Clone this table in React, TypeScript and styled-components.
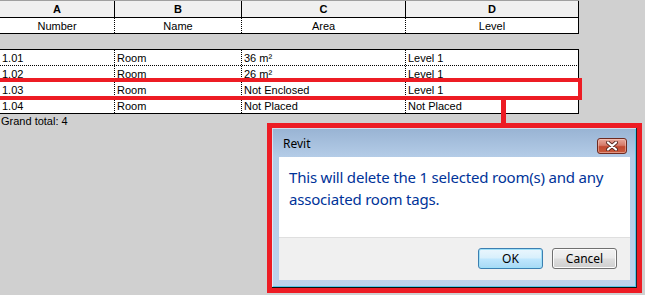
import React from "react";
import styled, { createGlobalStyle } from "styled-components";

const GlobalStyle = createGlobalStyle`
  html, body {
    margin: 0;
    padding: 0;
    background: #d0d0d0;
  }
  body {
    width: 645px;
    height: 295px;
    overflow: hidden;
    font-family: "Liberation Sans", Arial, sans-serif;
  }
`;

const Page = styled.div`
  display: flex;
  flex-direction: column;
  width: 645px;
`;

const Schedule = styled.div`
  position: relative;
  width: 579px;
  display: flex;
  flex-direction: column;
`;

const HeaderTable = styled.div`
  border-top: 1px solid #a0a0a0;
  border-bottom: 1px solid #000;
  background: #fff;
`;

const BodyTable = styled.div`
  margin-top: 15px;
  border-top: 1px solid #000;
  border-bottom: 1px solid #000;
  background: #fff;
`;

const Row = styled.div<{ $kind: "letters" | "titles" | "data"; $last?: boolean }>`
  display: grid;
  grid-template-columns: 115px 127px 164px 173px;
  height: ${(p) => (p.$kind === "letters" ? 16 : 15)}px;
  background: ${(p) => (p.$kind === "letters" ? "#f0f0f0" : "#fff")};
  border-bottom: ${(p) =>
    p.$kind === "letters"
      ? "1px solid #000"
      : p.$kind === "data" && !p.$last
      ? "1px dotted #000"
      : "none"};
`;

const Cell = styled.div<{ $kind: "letters" | "titles" | "data" }>`
  font-size: 11px;
  line-height: ${(p) => (p.$kind === "letters" ? 17 : 16)}px;
  color: #000;
  white-space: nowrap;
  overflow: hidden;
  padding-left: ${(p) => (p.$kind === "data" ? 2 : 0)}px;
  text-align: ${(p) => (p.$kind === "data" ? "left" : "center")};
  font-weight: ${(p) => (p.$kind === "letters" ? 700 : 400)};
  border-right: 1px ${(p) => (p.$kind === "letters" ? "solid" : "dotted")} #000;
  &:last-child {
    border-right: 1px solid #000;
  }
`;

/* red annotation frame around the selected row */
const RowHighlight = styled.div`
  position: absolute;
  left: -10px;
  top: 78px;
  width: 592px;
  height: 22px;
  box-sizing: border-box;
  border: 4.5px solid #ed1c24;
  pointer-events: none;
`;

const Footer = styled.div`
  display: flex;
  justify-content: space-between;
  align-items: flex-start;
`;

const GrandTotal = styled.div`
  font-size: 11px;
  line-height: 15px;
  padding: 0 0 0 1px;
  color: #000;
`;

const Callout = styled.div`
  position: relative;
  margin: 9px 3px 0 0;
  border: 5px solid #ed1c24;
  width: 365px;
  height: 160px;

  /* leader line up to the highlighted row */
  &::before {
    content: "";
    position: absolute;
    left: 229px;
    top: -28px;
    width: 5px;
    height: 23px;
    background: #ed1c24;
  }
`;

const Window = styled.div`
  box-sizing: border-box;
  width: 365px;
  height: 160px;
  display: flex;
  flex-direction: column;
  padding: 0 6px 7px 7px;
  background: linear-gradient(to bottom, #98b3d3 0px, #b4cce7 29px, #bdd3ec 100%);
  border-right: 1px solid #1d2a38;
  border-bottom: 1px solid #111;
  box-shadow: inset 1px 1px 0 rgba(255, 255, 255, 0.55), inset -1px -1px 0 #58c8e8;
  font-family: "Noto Sans", "Open Sans", sans-serif;
`;

const TitleBar = styled.div`
  height: 29px;
  display: flex;
  justify-content: space-between;
  align-items: flex-start;
  box-sizing: border-box;
  padding-top: 8px;
`;

const Title = styled.div`
  font-size: 12px;
  line-height: 16px;
  color: #000;
  padding-left: 4px;
`;

const CloseButton = styled.div`
  box-sizing: border-box;
  width: 30px;
  height: 16px;
  margin: 2px 3px 0 0;
  border: 1px solid #6e2a20;
  border-radius: 3px;
  background: linear-gradient(to bottom, #e8a99c 0%, #d57a69 45%, #c2482f 55%, #c85b3e 100%);
  box-shadow: inset 0 0 0 1px rgba(255, 220, 210, 0.45);
  display: flex;
  align-items: center;
  justify-content: center;
`;

const Client = styled.div`
  flex: 1;
  display: flex;
  flex-direction: column;
`;

const MessageArea = styled.div`
  height: 81px;
  background: #fff;
  border-bottom: 1px solid #dfdfdf;
  padding: 9px 0 0 10px;
  box-sizing: border-box;
`;

const Message = styled.div`
  font-size: 15px;
  line-height: 22px;
  color: #003399;
  letter-spacing: -0.2px;
  white-space: nowrap;
`;

const ButtonBar = styled.div`
  flex: 1;
  background: #f0f0f0;
  display: flex;
  justify-content: flex-end;
  align-items: flex-start;
  gap: 9px;
  padding: 10px 13px 0 0;
`;

const DialogButton = styled.button<{ $default?: boolean }>`
  box-sizing: border-box;
  width: 65px;
  height: 21px;
  padding: 0;
  font-family: "Noto Sans", "Open Sans", sans-serif;
  font-size: 12px;
  line-height: 18px;
  color: #000;
  border-radius: 3px;
  border: 1px solid ${(p) => (p.$default ? "#3c7fb1" : "#707070")};
  background: ${(p) =>
    p.$default
      ? "linear-gradient(to bottom, #eaf6fd 0%, #d9f0fc 45%, #bee6fd 55%, #a7d9f5 100%)"
      : "linear-gradient(to bottom, #f2f2f2 0%, #ebebeb 45%, #dddddd 55%, #cfcfcf 100%)"};
  box-shadow: inset 0 0 0 1px ${(p) => (p.$default ? "#9fe0f8" : "#fcfcfc")};
`;

const CloseGlyph = () => (
  <svg width="12" height="10" viewBox="0 0 12 10">
    <path d="M2 1.5 L10 8.5 M10 1.5 L2 8.5" stroke="#5a2a22" strokeWidth="4" strokeLinecap="round" />
    <path d="M2 1.5 L10 8.5 M10 1.5 L2 8.5" stroke="#ffffff" strokeWidth="2.2" strokeLinecap="round" />
  </svg>
);

type Room = { number: string; name: string; area: string; level: string };

const rooms: Room[] = [
  { number: "1.01", name: "Room", area: "36 m²", level: "Level 1" },
  { number: "1.02", name: "Room", area: "26 m²", level: "Level 1" },
  { number: "1.03", name: "Room", area: "Not Enclosed", level: "Level 1" },
  { number: "1.04", name: "Room", area: "Not Placed", level: "Not Placed" },
];

export default function App() {
  return (
    <>
      <GlobalStyle />
      <Page>
        <Schedule>
          <HeaderTable>
            <Row $kind="letters">
              {["A", "B", "C", "D"].map((l) => (
                <Cell key={l} $kind="letters">{l}</Cell>
              ))}
            </Row>
            <Row $kind="titles">
              {["Number", "Name", "Area", "Level"].map((t) => (
                <Cell key={t} $kind="titles">{t}</Cell>
              ))}
            </Row>
          </HeaderTable>
          <BodyTable>
            {rooms.map((r, i) => (
              <Row key={r.number} $kind="data" $last={i === rooms.length - 1}>
                <Cell $kind="data">{r.number}</Cell>
                <Cell $kind="data">{r.name}</Cell>
                <Cell $kind="data">{r.area}</Cell>
                <Cell $kind="data">{r.level}</Cell>
              </Row>
            ))}
          </BodyTable>
          <RowHighlight />
        </Schedule>
        <Footer>
          <GrandTotal>Grand total: 4</GrandTotal>
          <Callout>
            <Window>
              <TitleBar>
                <Title>Revit</Title>
                <CloseButton>
                  <CloseGlyph />
                </CloseButton>
              </TitleBar>
              <Client>
                <MessageArea>
                  <Message>
                    This will delete the 1 selected room(s) and any
                    <br />
                    associated room tags.
                  </Message>
                </MessageArea>
                <ButtonBar>
                  <DialogButton $default>OK</DialogButton>
                  <DialogButton>Cancel</DialogButton>
                </ButtonBar>
              </Client>
            </Window>
          </Callout>
        </Footer>
      </Page>
    </>
  );
}
